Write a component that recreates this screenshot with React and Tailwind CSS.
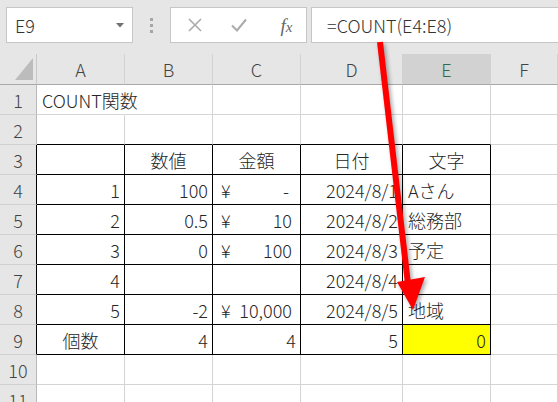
import React from 'react';

const COLS = ['A', 'B', 'C', 'D', 'E', 'F'];
const TABLE = ['A', 'B', 'C', 'D', 'E'];

const rows = [
  { n: 1, cells: { A: { t: 'COUNT関数', a: 'left' } } },
  { n: 2, cells: {} },
  {
    n: 3,
    cells: {
      B: { t: '数値', a: 'center' },
      C: { t: '金額', a: 'center' },
      D: { t: '日付', a: 'center' },
      E: { t: '文字', a: 'center' },
    },
  },
  {
    n: 4,
    cells: {
      A: { t: '1', a: 'right' },
      B: { t: '100', a: 'right' },
      C: { t: '-', a: 'acct' },
      D: { t: '2024/8/1', a: 'right' },
      E: { t: 'Aさん', a: 'left' },
    },
  },
  {
    n: 5,
    cells: {
      A: { t: '2', a: 'right' },
      B: { t: '0.5', a: 'right' },
      C: { t: '10', a: 'acct' },
      D: { t: '2024/8/2', a: 'right' },
      E: { t: '総務部', a: 'left' },
    },
  },
  {
    n: 6,
    cells: {
      A: { t: '3', a: 'right' },
      B: { t: '0', a: 'right' },
      C: { t: '100', a: 'acct' },
      D: { t: '2024/8/3', a: 'right' },
      E: { t: '予定', a: 'left' },
    },
  },
  {
    n: 7,
    cells: {
      A: { t: '4', a: 'right' },
      D: { t: '2024/8/4', a: 'right' },
    },
  },
  {
    n: 8,
    cells: {
      A: { t: '5', a: 'right' },
      B: { t: '-2', a: 'right' },
      C: { t: '10,000', a: 'acct' },
      D: { t: '2024/8/5', a: 'right' },
      E: { t: '地域', a: 'left' },
    },
  },
  {
    n: 9,
    cells: {
      A: { t: '個数', a: 'center' },
      B: { t: '4', a: 'right' },
      C: { t: '4', a: 'right' },
      D: { t: '5', a: 'right' },
      E: { t: '0', a: 'right', fill: true },
    },
  },
  { n: 10, cells: {} },
  { n: 11, cells: {} },
];

const inTable = (n, col) => n >= 3 && n <= 9 && TABLE.includes(col);

function Cell({ n, col, cell }) {
  const boxed = inTable(n, col);
  const rightCls =
    n === 1 && col === 'A'
      ? 'border-r-white'
      : boxed
      ? 'border-r-black'
      : 'border-r-[#d4d4d4]';
  const bottomCls =
    boxed || (n === 2 && TABLE.includes(col)) ? 'border-b-black' : 'border-b-[#d4d4d4]';

  let inner = null;
  if (cell) {
    if (cell.a === 'acct') {
      inner = (
        <div className="flex w-full justify-between pl-[8px] pr-[8px]">
          <span>¥</span>
          <span className={cell.t === '-' ? 'mr-[3px]' : ''}>{cell.t}</span>
        </div>
      );
    } else {
      inner = <span>{cell.t}</span>;
    }
  }

  const alignCls = !cell
    ? ''
    : cell.a === 'left'
    ? 'justify-start pl-[5px]'
    : cell.a === 'right'
    ? 'justify-end pr-[4px]'
    : cell.a === 'center'
    ? 'justify-center'
    : '';

  return (
    <div
      className={`flex h-[30px] items-center whitespace-nowrap border-r border-b ${rightCls} ${bottomCls} ${alignCls} ${
        cell?.fill ? 'bg-[#ffff00]' : ''
      }`}
    >
      {inner}
    </div>
  );
}

function FormulaBar() {
  return (
    <div className="flex h-[54px] items-start bg-[#e6e6e6] pt-[7px]">
      {/* Name box */}
      <div className="ml-[6px] flex h-[36px] w-[127px] items-center justify-between border border-[#c6c6c6] bg-white pl-[8px] pr-[8px]">
        <span className="text-[18px] text-[#333]">E9</span>
        <svg width="8" height="5" viewBox="0 0 8 5">
          <polygon points="0,0 8,0 4,4.5" fill="#707070" />
        </svg>
      </div>
      {/* Grip dots */}
      <div className="flex h-[36px] w-[37px] flex-col items-center justify-center gap-[3px]">
        <div className="h-[3px] w-[3px] bg-[#a6a6a6]" />
        <div className="h-[3px] w-[3px] bg-[#a6a6a6]" />
        <div className="h-[3px] w-[3px] bg-[#a6a6a6]" />
      </div>
      {/* Cancel / enter / fx */}
      <div className="flex h-[36px] w-[137px] items-center border border-[#c6c6c6] bg-white">
        <div className="flex w-[45px] justify-center pl-[3px]">
          <svg width="16" height="16" viewBox="0 0 16 16">
            <path d="M2 2 L14 14 M14 2 L2 14" stroke="#ababab" strokeWidth="1.6" />
          </svg>
        </div>
        <div className="flex w-[45px] justify-center">
          <svg width="18" height="16" viewBox="0 0 18 16">
            <path d="M2 8.5 L7 13.5 L16 2.5" stroke="#ababab" strokeWidth="2" fill="none" />
          </svg>
        </div>
        <div className="flex w-[45px] justify-center pl-[6px]">
          <span className="font-['Liberation_Serif',serif] text-[19px] italic text-[#666]">
            f<span className="text-[15px]">x</span>
          </span>
        </div>
      </div>
      {/* Formula input */}
      <div className="ml-[4px] flex h-[36px] flex-1 items-center border border-r-0 border-[#c6c6c6] bg-white pl-[15px]">
        <span className="text-[18px] text-[#333]">=COUNT(E4:E8)</span>
      </div>
    </div>
  );
}

export default function App() {
  return (
    <div className="relative h-[402px] w-[558px] overflow-hidden bg-white font-['Noto_Sans_CJK_JP','Noto_Sans',sans-serif] font-light leading-none text-[#262626]">
      <FormulaBar />

      <div className="grid grid-cols-[37px_88px_88px_88px_102px_88px_1fr] text-[18px]">
        {/* Column headers */}
        <div className="relative h-[31px] border-r border-b border-r-[#c8c8c8] border-b-[#a8a8a8] bg-[#e6e6e6]">
          <svg className="absolute left-0 top-0" width="36" height="30" viewBox="0 0 36 30">
            <polygon points="33,4 33,26 15,26" fill="#bcbcbc" />
          </svg>
        </div>
        {COLS.map((c) => (
          <div
            key={c}
            className={`flex h-[31px] items-center justify-center border-r border-b border-r-[#d2d2d2] border-b-[#a8a8a8] text-[18px] ${
              c === 'E' ? 'bg-[#d2d2d2] text-[#2f6b48]' : 'bg-[#e6e6e6] text-[#444]'
            }`}
          >
            {c}
          </div>
        ))}

        {rows.map((r) => (
          <React.Fragment key={r.n}>
            <div
              className={`flex h-[30px] items-center justify-center border-r border-b border-b-[#d0d0d0] bg-[#e6e6e6] text-[#444] ${
                r.n >= 3 && r.n <= 9 ? 'border-r-black' : 'border-r-[#b8b8b8]'
              }`}
            >
              {r.n}
            </div>
            {COLS.map((c) => (
              <Cell key={c} n={r.n} col={c} cell={r.cells[c]} />
            ))}
          </React.Fragment>
        ))}
      </div>

      {/* Red arrow annotation */}
      <svg
        className="pointer-events-none absolute left-0 top-0"
        width="558"
        height="402"
        viewBox="0 0 558 402"
        style={{ filter: 'drop-shadow(2px 2px 2px rgba(0,0,0,0.35))' }}
      >
        <line x1="380" y1="42" x2="408" y2="284" stroke="#ff0000" strokeWidth="6" />
        <polygon points="397,282 425,277 413,310" fill="#ff0000" />
      </svg>
    </div>
  );
}
